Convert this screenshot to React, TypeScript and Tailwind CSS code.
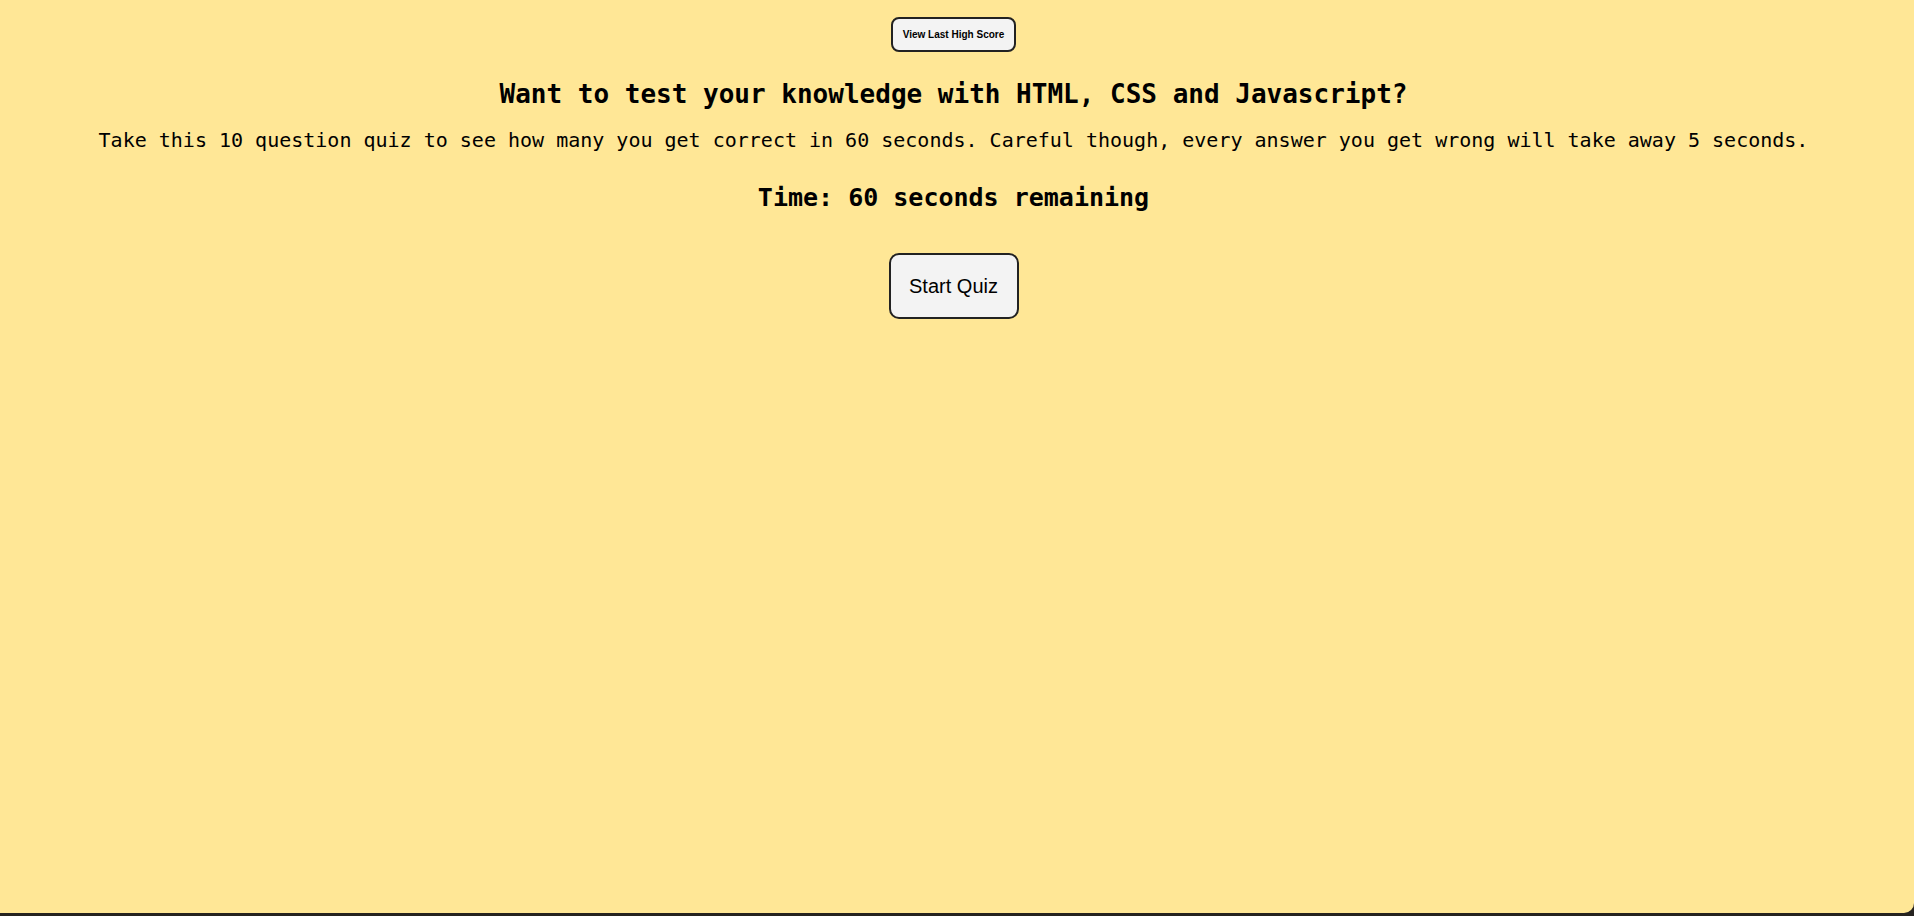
export default function App() {
  return (
    <div className="flex h-[916px] w-full flex-col bg-[#262320]">
      <main className="flex h-[913px] w-full flex-col items-center rounded-br-[10px] bg-[#ffe796] pr-[7px] text-center text-black">
        <button className="mt-[17px] h-[35px] w-[125px] rounded-[8px] border-2 border-[#222222] bg-[#f3f3f3] font-['Liberation_Sans',Arial,sans-serif] text-[10px] font-bold">
          View Last High Score
        </button>

        <h2 className="mt-[27px] font-['DejaVu_Sans_Mono',monospace] text-[26px] font-bold leading-[30px]">
          Want to test your knowledge with HTML, CSS and Javascript?
        </h2>

        <p className="mt-[19px] font-['DejaVu_Sans_Mono',monospace] text-[20px] leading-[24px]">
          Take this 10 question quiz to see how many you get correct in 60 seconds. Careful though,
          every answer you get wrong will take away 5 seconds.
        </p>

        <h3 className="mt-[31px] font-['DejaVu_Sans_Mono',monospace] text-[25px] font-bold leading-[30px]">
          Time: 60 seconds remaining
        </h3>

        <button className="mt-[40px] h-[66px] w-[130px] rounded-[10px] border-2 border-[#222222] bg-[#f3f3f3] font-['Liberation_Sans',Arial,sans-serif] text-[20px]">
          Start Quiz
        </button>
      </main>
    </div>
  );
}
